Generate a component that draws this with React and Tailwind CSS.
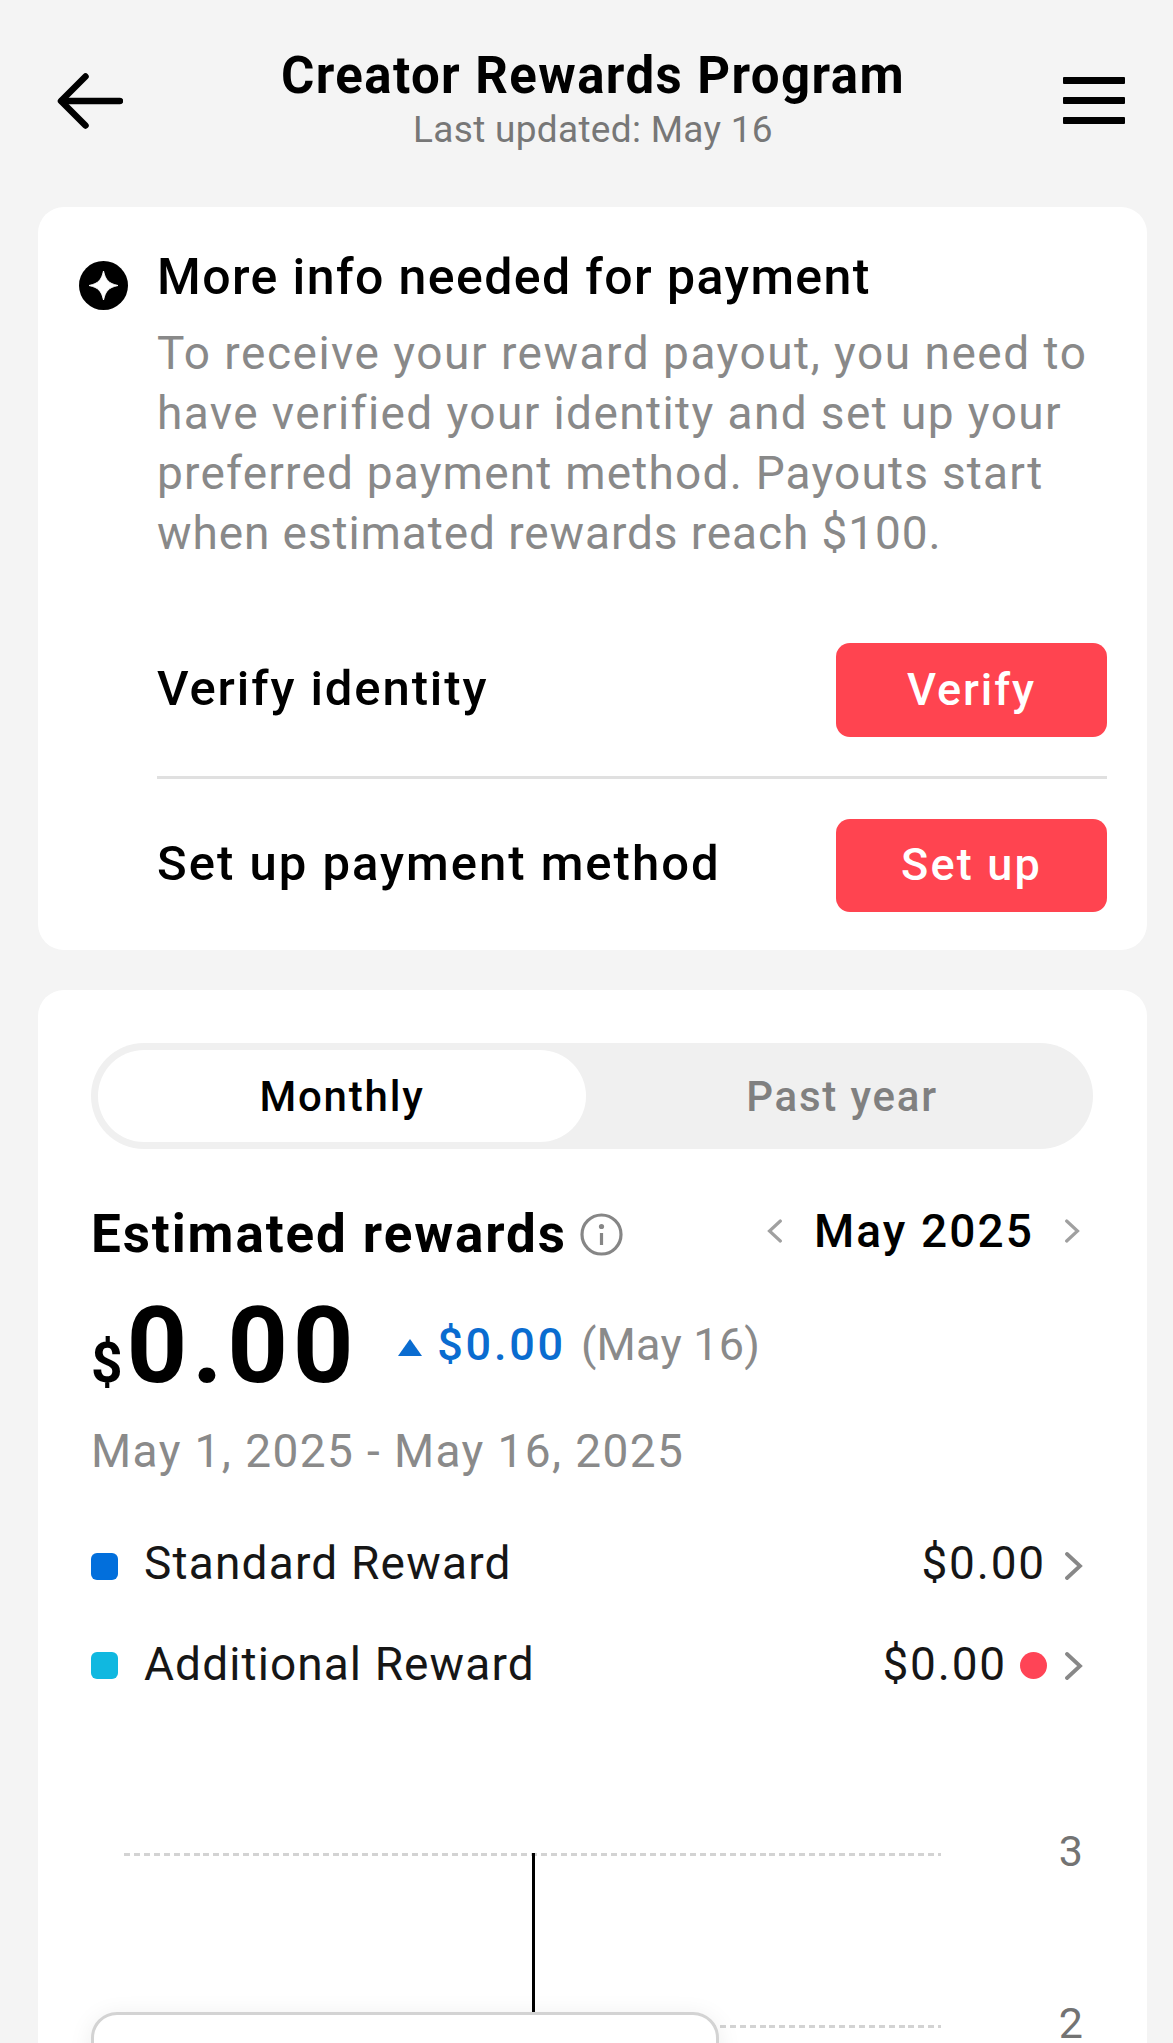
import React from 'react'

const Chevron = ({ className }) => (
    <svg viewBox="0 0 18 28" fill="none" stroke="currentColor" strokeWidth="3.8" strokeLinecap="round" strokeLinejoin="miter" className={className}>
        <path d="M2 2L15 14L2 26" />
    </svg>
)

const Header = () => {
    return (
        <header className="flex h-[207px] justify-between pl-[57px] pr-[48px]">
            <svg viewBox="0 0 66 58" fill="none" stroke="#000" strokeWidth="6.5" strokeLinecap="round" strokeLinejoin="round" className="mt-[72px] h-[58px] w-[66px]">
                <path d="M28.500 4.500L4 29L28.500 53.500" />
                <path d="M5 29H63" />
            </svg>
            <div className="mt-[46px] text-center">
                <h1 className="text-[51px] font-bold leading-[60px] tracking-[1.4px]">Creator Rewards Program</h1>
                <p className="mt-[2px] text-[37px] leading-[44px] tracking-[0.3px] text-[#777777]">Last updated: May 16</p>
            </div>
            <div className="mt-[77px] flex w-[62px] flex-col gap-[13px]">
                <span className="h-[7px] rounded-[1px] bg-black"></span>
                <span className="h-[7px] rounded-[1px] bg-black"></span>
                <span className="h-[7px] rounded-[1px] bg-black"></span>
            </div>
        </header>
    )
}

const PaymentCard = () => {
    return (
        <section className="ml-[38px] mr-[26px] flex h-[743px] rounded-[26px] bg-white pl-[41px] pr-[40px] pt-[40px]">
            <svg viewBox="0 0 49 49" className="mt-[14px] h-[49px] w-[49px] shrink-0">
                <circle cx="24.500" cy="24.500" r="24.500" fill="#000" />
                <path d="M24.500 10C26.500 19 29.500 22.500 39 24.500C29.500 26.500 26.500 30 24.500 39C22.500 30 19.500 26.500 10 24.500C19.500 22.500 22.500 19 24.500 10Z" fill="#fff" stroke="#fff" strokeLinejoin="round" />
            </svg>
            <div className="ml-[29px] flex-1 whitespace-nowrap">
                <h2 className="text-[50px] font-medium leading-[60px] tracking-[1.4px]">More info needed for payment</h2>
                <p className="mt-4 text-[46px] leading-[60px] text-[#898989]">
                    <span className="tracking-[1.5px]">To receive your reward payout, you need to</span><br />
                    <span className="tracking-[1.4px]">have verified your identity and set up your</span><br />
                    <span className="tracking-[1.2px]">preferred payment method. Payouts start</span><br />
                    <span className="tracking-[0.9px]">when estimated rewards reach $100.</span>
                </p>
                <div className="mt-20 flex items-center justify-between border-b-3 border-[#e0e0e0] pb-[39px]">
                    <span className="pb-[3px] text-[49px] font-medium leading-[60px] tracking-[1.9px]">Verify identity</span>
                    <button className="h-[94px] w-[271px] rounded-[14px] bg-[#ff4450] text-[45px] font-medium tracking-[1.9px] text-white">Verify</button>
                </div>
                <div className="flex items-center justify-between pt-10">
                    <span className="pb-[3px] text-[49px] font-medium leading-[60px] tracking-[2px]">Set up payment method</span>
                    <button className="h-[93px] w-[271px] rounded-[14px] bg-[#ff4450] pb-[2px] text-[45px] font-medium tracking-[2.2px] text-white">Set up</button>
                </div>
            </div>
        </section>
    )
}

const Chart = () => {
    return (
        <div className="relative mt-[130px] text-[43px] leading-none text-[#737373]">
            <div className="flex h-[60px] items-center justify-between pl-[33px] pr-[10px]">
                <div className="h-[3px] w-[817px] bg-[repeating-linear-gradient(90deg,#d3d3d3_0_6px,transparent_6px_9.93px)]"></div>
                <span className="mb-[6px]">3</span>
            </div>
            <div className="mt-[112px] flex h-[60px] items-center justify-between pl-[33px] pr-[10px]">
                <div className="h-[3px] w-[817px] bg-[repeating-linear-gradient(90deg,#d3d3d3_0_6px,transparent_6px_9.93px)]"></div>
                <span className="mb-[6px]">2</span>
            </div>
            <div className="absolute left-[441px] top-[29px] h-[160px] w-[3px] bg-black"></div>
            <div className="absolute left-0 top-[188px] h-[200px] w-[628px] rounded-[26px] border-3 border-[#d3d3d3] bg-white shadow-[0_4px_24px_rgba(0,0,0,0.08)]"></div>
        </div>
    )
}

const RewardsCard = () => {
    return (
        <section className="ml-[38px] mr-[26px] mt-10 h-[1100px] whitespace-nowrap rounded-[26px] bg-white pl-[53px] pr-[54px] pt-[53px]">
            <div className="flex h-[106px] gap-3 rounded-full bg-[#f0f0f0] p-[7px] text-[42px] font-medium tracking-[1.8px]">
                <button className="w-[488px] rounded-full bg-white">Monthly</button>
                <button className="flex-1 text-[#808080]">Past year</button>
            </div>

            <div className="mt-[55px] flex h-[60px] items-center leading-[60px]">
                <h2 className="text-[53px] font-bold tracking-[1.9px]">Estimated rewards</h2>
                <svg viewBox="0 0 43 43" fill="none" stroke="#868686" strokeWidth="3.2" className="ml-[13px] h-[43px] w-[43px]">
                    <circle cx="21.500" cy="21.500" r="19.500" />
                    <path d="M21.500 20V32" />
                    <circle cx="21.500" cy="13.500" r="2.600" fill="#868686" stroke="none" />
                </svg>
                <div className="mb-[7px] ml-auto mr-[13px] flex items-center">
                    <Chevron className="h-[24px] w-[15px] rotate-180 text-[#a0a0a0]" />
                    <span className="ml-[32px] mr-[31px] text-[46px] font-medium tracking-[2.1px]">May 2025</span>
                    <Chevron className="h-[24px] w-[15px] text-[#a0a0a0]" />
                </div>
            </div>

            <div className="mt-[29px] flex h-[100px] items-center">
                <div className="mt-[6px] flex items-baseline font-bold">
                    <span className="text-[55px] leading-none">$</span>
                    <span className="ml-[4px] text-[106px] leading-[100px] tracking-[4.600px]">0.00</span>
                </div>
                <svg viewBox="0 0 24 17" className="ml-[40px] mt-[8px] h-[17px] w-[24px] fill-[#0a6cd0]">
                    <path d="M12 0L24 17H0Z" />
                </svg>
                <span className="ml-[15px] mt-[3px] text-[45px] font-medium tracking-[2.8px] text-[#0a6cd0]">$0.00</span>
                <span className="ml-[15px] mt-[3px] text-[45px] tracking-[0.2px] text-[#8a8a8a]">(May 16)</span>
            </div>
            <p className="mt-[28px] text-[46px] leading-[60px] tracking-[1.4px] text-[#8a8a8a]">May 1, 2025 - May 16, 2025</p>

            <div className="mt-[52px] flex items-center text-[46px] leading-[60px] tracking-[1.2px] text-[#161616]">
                <span className="mt-[6px] h-[27px] w-[27px] rounded-[6px] bg-[#026fdc]"></span>
                <span className="ml-[26px]">Standard Reward</span>
                <span className="ml-auto tracking-[1.8px]">$0.00</span>
                <Chevron className="ml-[19px] mr-[10px] mt-[6px] h-[28px] w-[18px] text-[#888888]" />
            </div>
            <div className="mt-[41px] flex items-center text-[46px] leading-[60px] tracking-[1.1px] text-[#161616]">
                <span className="mt-[3px] h-[27px] w-[27px] rounded-[6px] bg-[#10b8e0]"></span>
                <span className="ml-[26px]">Additional Reward</span>
                <span className="ml-auto tracking-[1.8px]">$0.00</span>
                <span className="ml-[13px] mt-[3px] h-[27px] w-[27px] rounded-full bg-[#ff4456]"></span>
                <Chevron className="ml-[18px] mr-[10px] mt-[3px] h-[28px] w-[18px] text-[#888888]" />
            </div>

            <Chart />
        </section>
    )
}

const App = () => {
    return (
        <div className="h-[2043px] w-[1173px] overflow-hidden bg-[#f4f4f4] font-['Roboto',sans-serif] text-black">
            <Header />
            <PaymentCard />
            <RewardsCard />
        </div>
    )
}

export default App
